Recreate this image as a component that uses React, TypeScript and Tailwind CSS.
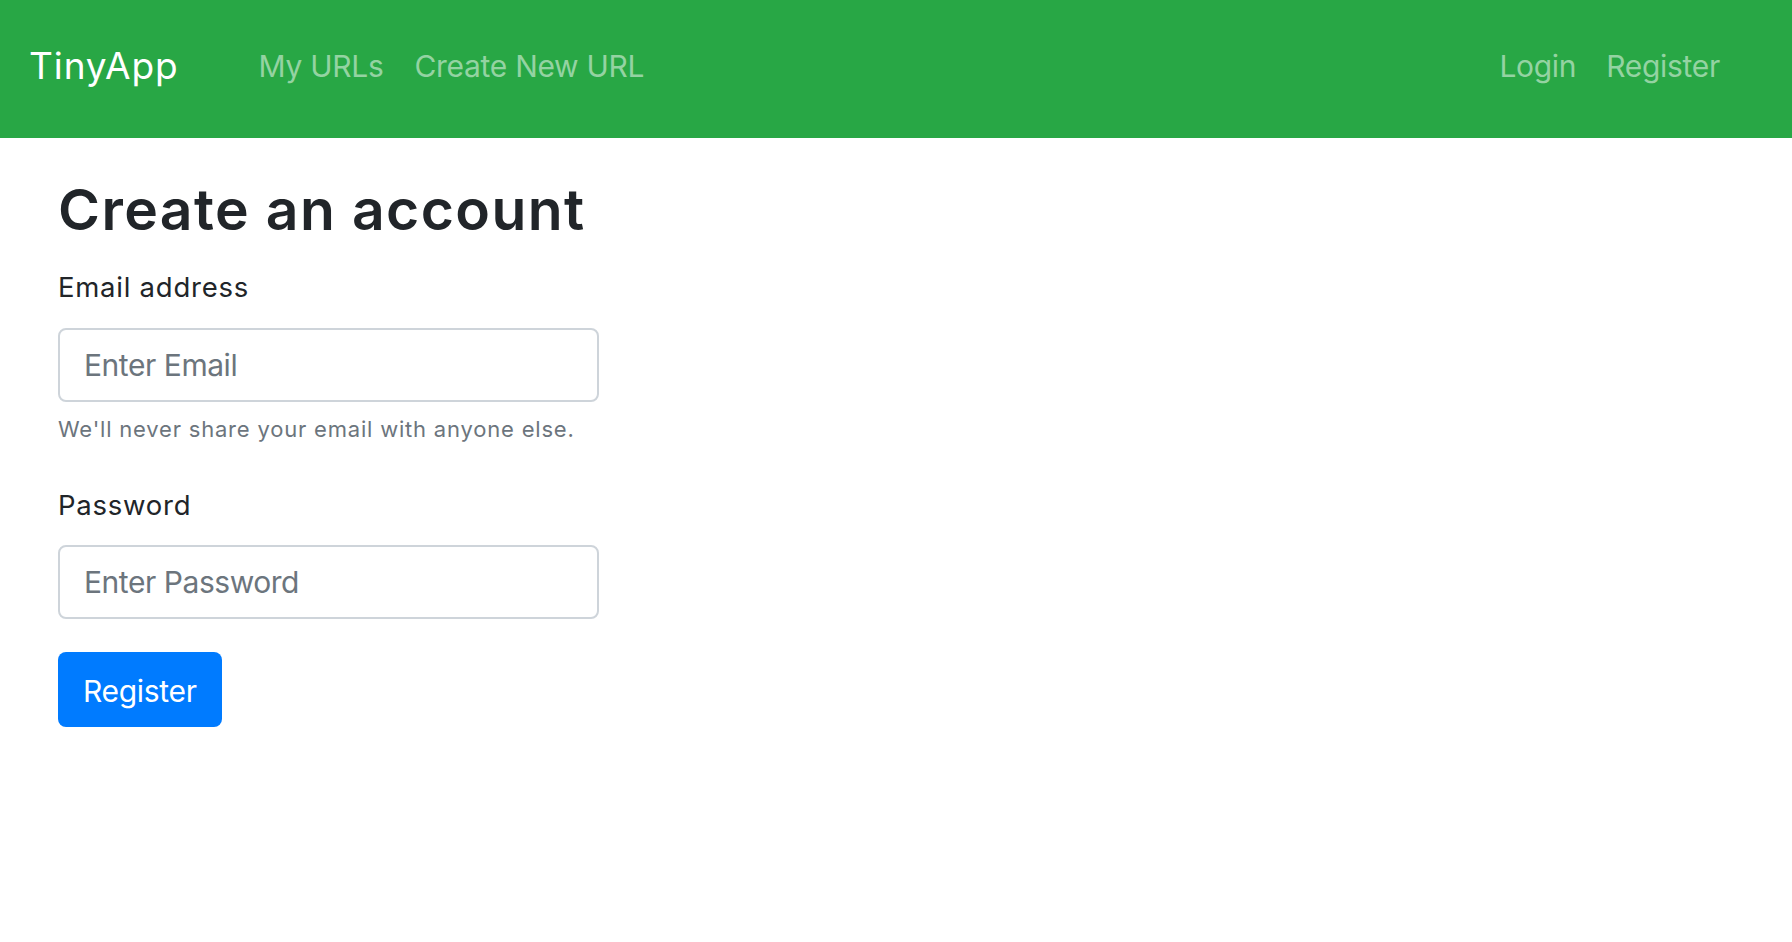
import React from "react";

export default function App() {
  return (
    <div className="min-h-[942px] bg-white font-['Inter',sans-serif] text-[#212529]">
      <nav className="flex h-[138px] items-start bg-[#28a745] pl-[29px] pr-[72px]">
        <a className="mt-[47px] block text-[37px] leading-none tracking-[0.9px] text-white">TinyApp</a>
        <div className="ml-[80px] mt-[51px] flex gap-[31px] text-[30px] leading-none tracking-[-0.3px] text-[#94d3a2]">
          <a className="block">My URLs</a>
          <a className="block">Create New URL</a>
        </div>
        <div className="ml-auto mt-[51px] flex gap-[30px] text-[30px] leading-none tracking-[-0.3px] text-[#94d3a2]">
          <a className="block">Login</a>
          <a className="block">Register</a>
        </div>
      </nav>
      <main className="pl-[58px]">
        <h1 className="mt-[43px] text-[57px] font-semibold leading-none tracking-[1.4px]">Create an account</h1>
        <form className="flex w-[541px] flex-col">
          <label className="mt-[36px] text-[27.5px] leading-none tracking-[0.75px]">Email address</label>
          <input
            type="email"
            placeholder="Enter Email"
            className="mt-[26px] h-[74px] w-full rounded-[8px] border-2 border-[#ced4da] px-[24px] text-[30px] tracking-[-0.45px] outline-none placeholder:text-[#6c757d]"
          />
          <small className="mt-[16px] block text-[22px] leading-none tracking-[0.8px] text-[#6c757d]">
            We'll never share your email with anyone else.
          </small>
          <label className="mt-[52px] text-[27.5px] leading-none tracking-[0.75px]">Password</label>
          <input
            type="password"
            placeholder="Enter Password"
            className="mt-[26px] h-[74px] w-full rounded-[8px] border-2 border-[#ced4da] px-[24px] text-[30px] tracking-[-0.45px] outline-none placeholder:text-[#6c757d]"
          />
          <div className="mt-[33px]">
            <button
              type="button"
              className="rounded-[8px] bg-[#007bff] px-[25px] pb-[21px] pt-[24px] text-[30px] leading-none tracking-[-0.3px] text-white"
            >
              Register
            </button>
          </div>
        </form>
      </main>
    </div>
  );
}
